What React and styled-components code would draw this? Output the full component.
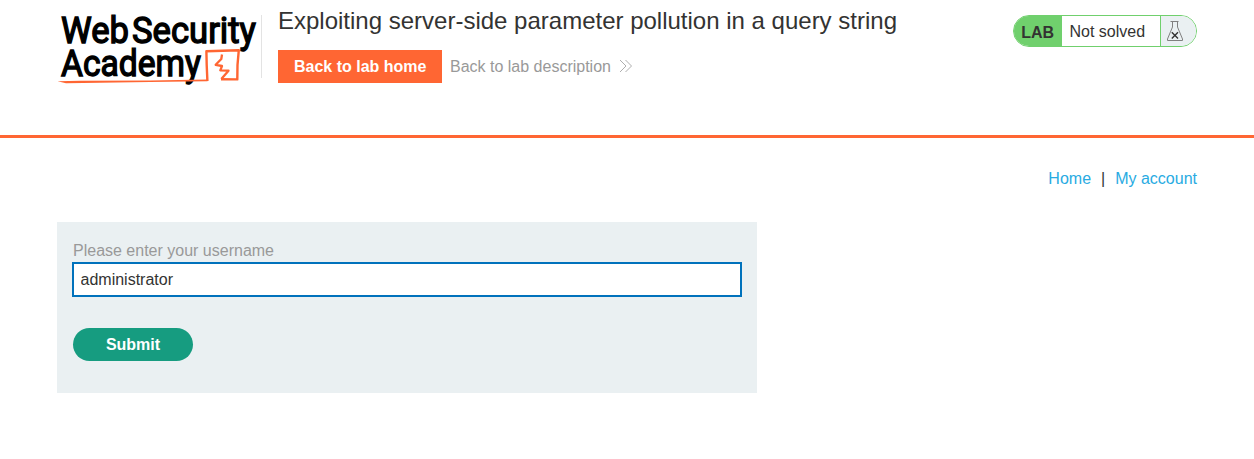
import React from "react";
import styled, { createGlobalStyle } from "styled-components";

const GlobalStyle = createGlobalStyle`
  * { box-sizing: border-box; }
  body {
    margin: 0;
    background: #fff;
    color: #333332;
    font: 16px/18px "Liberation Sans", Arial, sans-serif;
  }
`;

const Header = styled.header`
  height: 138px;
  border-bottom: 3px solid #ff6633;
`;

const Container = styled.div`
  width: 1140px;
  margin: 0 auto;
`;

const HeaderRow = styled(Container)`
  display: flex;
  align-items: flex-start;
`;

const LogoCell = styled.div`
  width: 205px;
  height: 63px;
  margin-top: 15px;
  border-right: 1px solid #e3e3e3;
`;

const LogoSvg = styled.svg`
  display: block;
  overflow: visible;
  font-family: Roboto, "Liberation Sans", sans-serif;
  font-size: 37px;
  font-weight: 400;
`;

const TitleBlock = styled.div`
  flex: 1;
  padding: 7px 0 0 16px;
`;

const Title = styled.h2`
  margin: 0 0 15px;
  font-size: 24px;
  font-weight: 400;
  line-height: 28px;
  white-space: nowrap;
`;

const Actions = styled.div`
  display: flex;
  align-items: center;
  gap: 7.5px;
`;

const LabHome = styled.a`
  height: 33px;
  padding: 0 16px;
  background: #ff6633;
  color: #fff;
  font-weight: 700;
  line-height: 33px;
`;

const LabDescription = styled.a`
  display: flex;
  align-items: center;
  gap: 8px;
  color: #999;
`;

const ChevronsSvg = styled.svg`
  margin-bottom: 2px;
`;

const Status = styled.div`
  display: flex;
  width: 184px;
  height: 32px;
  margin-top: 15px;
  border: 1px solid #70d06d;
  border-radius: 16px;
  overflow: hidden;
  line-height: 32px;
`;

const StatusTag = styled.span`
  width: 48px;
  padding-left: 7.2px;
  padding-top: 1px;
  background: #70d06d;
  font-weight: 700;
`;

const StatusText = styled.span`
  flex: 1;
  padding-left: 7.5px;
`;

const StatusIcon = styled.span`
  width: 36px;
  border-left: 1px solid #70d06d;
  background: #eaf0f2;
`;

const Nav = styled.nav`
  display: flex;
  justify-content: flex-end;
  gap: 10px;
  padding-top: 32px;
`;

const NavLink = styled.a`
  color: #29abe2;
`;

const Form = styled.form`
  width: 700px;
  height: 171px;
  margin-top: 34px;
  padding: 20px 15px 0;
  background: #eaf0f2;
`;

const Label = styled.label`
  display: block;
  padding-left: 1px;
  color: #999;
  line-height: 18px;
`;

const Input = styled.input`
  display: block;
  width: 670px;
  height: 35px;
  margin: 2px 0 31px;
  padding: 0 6.5px;
  border: 2px solid #0072bc;
  border-radius: 0;
  outline: none;
  background: #fff;
  color: #333332;
  font: inherit;
`;

const Submit = styled.button`
  display: block;
  width: 120px;
  height: 33px;
  margin-left: 1px;
  padding: 0;
  border: 0;
  border-radius: 17px;
  background: #169c80;
  color: #fff;
  font: inherit;
  font-weight: 700;
`;

function Logo() {
  return (
    <LogoSvg width="204" height="72" viewBox="57 15 204 72">
      <g fill="#000" stroke="#000" strokeWidth="1.4">
        <text x="61" y="43" textLength="68" lengthAdjust="spacingAndGlyphs">Web</text>
        <text x="132" y="43" textLength="124" lengthAdjust="spacingAndGlyphs">Security</text>
        <text x="61" y="75.8" textLength="140" lengthAdjust="spacingAndGlyphs">Academy</text>
      </g>
      <g fill="none" stroke="#ff6633" strokeLinejoin="round">
        <path d="M57.5 81.2 L80 80.7 L150 80.4 L207.5 79.5 V81.3 L150 82 L100 82.8 L66 83.2 Z" fill="#ff6633" stroke="none" />
        <path d="M207.4 81 L206.7 65 L206.4 51.2 L238.8 50.2 L237.5 65 L237.3 79.4 L221 79.3" strokeWidth="2.4" />
        <path d="M222 54.5 L221.3 59 L215.7 64.8 L222 66 L220.3 70.3 L228.5 70.7 L221.3 79" strokeWidth="2.3" />
      </g>
    </LogoSvg>
  );
}

function Chevrons() {
  return (
    <ChevronsSvg width="14" height="14" viewBox="0 0 14 14" fill="none" stroke="#999" strokeWidth="0.8">
      <path d="M1 1 L7 7 L1 13 M6.5 1 L12.5 7 L6.5 13" />
    </ChevronsSvg>
  );
}

function Flask() {
  return (
    <svg width="28" height="30" viewBox="1161 16 28 30" fill="none" display="block">
      <path
        d="M1170.5 21.5 H1178.5 M1172.5 21.5 V27 L1167.5 39 V40.5 H1182.5 V39 L1177.5 27 V21.5"
        stroke="#808080"
        strokeWidth="1"
      />
      <path d="M1171.8 32.2 L1178 38.4 M1178 32.2 L1171.8 38.4" stroke="#333" strokeWidth="1.4" />
    </svg>
  );
}

export default function App() {
  return (
    <>
      <GlobalStyle />
      <Header>
        <HeaderRow>
          <LogoCell><Logo /></LogoCell>
          <TitleBlock>
            <Title>Exploiting server-side parameter pollution in a query string</Title>
            <Actions>
              <LabHome>Back to lab home</LabHome>
              <LabDescription>Back to lab description <Chevrons /></LabDescription>
            </Actions>
          </TitleBlock>
          <Status>
            <StatusTag>LAB</StatusTag>
            <StatusText>Not solved</StatusText>
            <StatusIcon><Flask /></StatusIcon>
          </Status>
        </HeaderRow>
      </Header>
      <Container as="main">
        <Nav>
          <NavLink>Home</NavLink>
          <span>|</span>
          <NavLink>My account</NavLink>
        </Nav>
        <Form onSubmit={(e) => e.preventDefault()}>
          <Label htmlFor="username">Please enter your username</Label>
          <Input id="username" type="text" defaultValue="administrator" />
          <Submit type="submit">Submit</Submit>
        </Form>
      </Container>
    </>
  );
}
